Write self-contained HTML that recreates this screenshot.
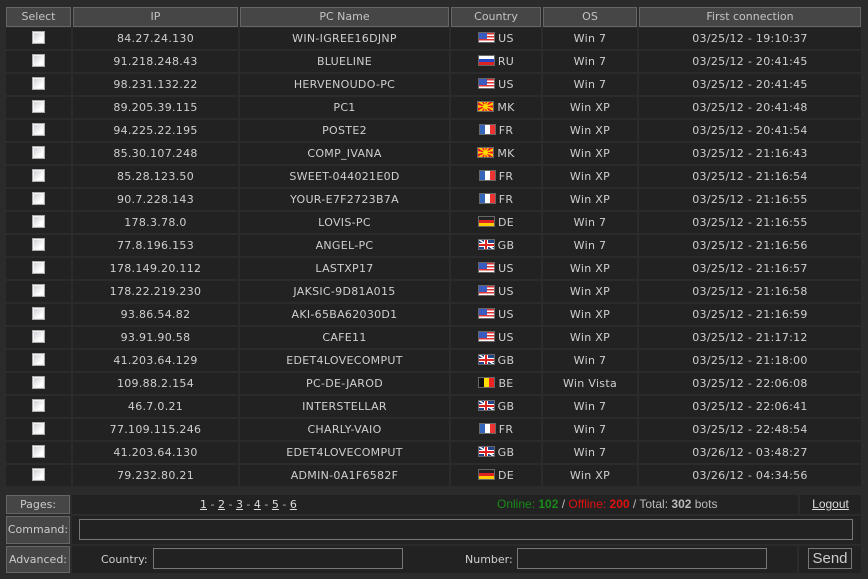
<!DOCTYPE html>
<html><head><meta charset="utf-8"><style>
*{margin:0;padding:0;box-sizing:border-box}
body{width:868px;height:579px;background:#2b2b2b;font-family:"DejaVu Sans","Liberation Sans",sans-serif;font-size:11px;color:#cfcfcf;position:relative;overflow:hidden}
.a{position:absolute}
.h{position:absolute;top:7px;height:20px;background:#464646;border:1px solid #666;text-align:center;line-height:18px;color:#c4c4c4}
.c{position:absolute;height:21px;background:#222;text-align:center;line-height:21px;letter-spacing:.3px}
.cb{display:inline-block;width:13px;height:13px;vertical-align:middle;margin-top:-3px;border:1px solid #aaa;background:linear-gradient(135deg,#c8c8d0,#fff 70%);box-shadow:inset 0 0 0 1px #f4f4f4}
.f{display:inline-block;width:17px;height:11px;vertical-align:middle;margin:-3px 3px 0 0;border:1px solid #666}
.us{background:linear-gradient(#3a5bbf,#3a5bbf) 0 0/8px 6px no-repeat,repeating-linear-gradient(#d33 0 1.5px,#fff 1.5px 3px)}
.ru{background:linear-gradient(#fff 33%,#2646c8 33% 66%,#d22 66%)}
.mk{background:radial-gradient(circle,#fd0 2px,transparent 3px),repeating-conic-gradient(#e22 0 20deg,#fc0 20deg 40deg)}
.fr{background:linear-gradient(90deg,#36b 33%,#fff 33% 66%,#e33 66%)}
.de{background:linear-gradient(#222 33%,#d22 33% 66%,#fc0 66%)}
.gb{background:linear-gradient(#d22,#d22) center/17px 2px no-repeat,linear-gradient(#d22,#d22) center/2px 11px no-repeat,linear-gradient(#fff,#fff) center/17px 4px no-repeat,linear-gradient(#fff,#fff) center/4px 11px no-repeat,linear-gradient(33deg,#248 45%,#fff 45% 55%,#248 55%),#248}
.be{background:linear-gradient(90deg,#111 33%,#fd0 33% 66%,#e22 66%)}
.lb{position:absolute;left:6px;width:64px;background:#464646;border:1px solid #666;text-align:center;color:#ccc}
.in{position:absolute;border:1px solid #777;background:#222}
u{color:#ddd}
</style></head><body>
<div class="h" style="left:6px;width:65px">Select</div>
<div class="h" style="left:73px;width:165px">IP</div>
<div class="h" style="left:240px;width:209px">PC Name</div>
<div class="h" style="left:451px;width:90px">Country</div>
<div class="h" style="left:543px;width:94px">OS</div>
<div class="h" style="left:639px;width:222px">First connection</div>
<div id="rows"></div>
<script>
var d=[["84.27.24.130","WIN-IGREE16DJNP","us","US","Win 7","03/25/12 - 19:10:37"],
["91.218.248.43","BLUELINE","ru","RU","Win 7","03/25/12 - 20:41:45"],
["98.231.132.22","HERVENOUDO-PC","us","US","Win 7","03/25/12 - 20:41:45"],
["89.205.39.115","PC1","mk","MK","Win XP","03/25/12 - 20:41:48"],
["94.225.22.195","POSTE2","fr","FR","Win XP","03/25/12 - 20:41:54"],
["85.30.107.248","COMP_IVANA","mk","MK","Win XP","03/25/12 - 21:16:43"],
["85.28.123.50","SWEET-044021E0D","fr","FR","Win XP","03/25/12 - 21:16:54"],
["90.7.228.143","YOUR-E7F2723B7A","fr","FR","Win XP","03/25/12 - 21:16:55"],
["178.3.78.0","LOVIS-PC","de","DE","Win 7","03/25/12 - 21:16:55"],
["77.8.196.153","ANGEL-PC","gb","GB","Win 7","03/25/12 - 21:16:56"],
["178.149.20.112","LASTXP17","us","US","Win XP","03/25/12 - 21:16:57"],
["178.22.219.230","JAKSIC-9D81A015","us","US","Win XP","03/25/12 - 21:16:58"],
["93.86.54.82","AKI-65BA62030D1","us","US","Win XP","03/25/12 - 21:16:59"],
["93.91.90.58","CAFE11","us","US","Win XP","03/25/12 - 21:17:12"],
["41.203.64.129","EDET4LOVECOMPUT","gb","GB","Win 7","03/25/12 - 21:18:00"],
["109.88.2.154","PC-DE-JAROD","be","BE","Win Vista","03/25/12 - 22:06:08"],
["46.7.0.21","INTERSTELLAR","gb","GB","Win 7","03/25/12 - 22:06:41"],
["77.109.115.246","CHARLY-VAIO","fr","FR","Win 7","03/25/12 - 22:48:54"],
["41.203.64.130","EDET4LOVECOMPUT","gb","GB","Win 7","03/26/12 - 03:48:27"],
["79.232.80.21","ADMIN-0A1F6582F","de","DE","Win XP","03/26/12 - 04:34:56"]];
var h="";d.forEach(function(r,i){var t=28+23*i;
h+='<div class="c" style="top:'+t+'px;left:6px;width:65px"><span class="cb"></span></div>'+
'<div class="c" style="top:'+t+'px;left:73px;width:165px">'+r[0]+'</div>'+
'<div class="c" style="top:'+t+'px;left:240px;width:209px">'+r[1]+'</div>'+
'<div class="c" style="top:'+t+'px;left:451px;width:90px"><span class="f '+r[2]+'"></span>'+r[3]+'</div>'+
'<div class="c" style="top:'+t+'px;left:543px;width:94px">'+r[4]+'</div>'+
'<div class="c" style="top:'+t+'px;left:639px;width:222px">'+r[5]+'</div>';});
document.getElementById("rows").innerHTML=h;
</script>
<div class="lb" style="top:495px;height:19px;line-height:17px">Pages:</div>
<div class="a" style="left:72px;top:495px;width:726px;height:19px;background:#222"></div>
<div class="a" style="left:200px;top:495px;width:106px;line-height:19px;color:#bbb"><u>1</u> - <u>2</u> - <u>3</u> - <u>4</u> - <u>5</u> - <u>6</u></div>
<div class="a" style="left:497px;top:495px;line-height:19px;font-family:'Liberation Sans',sans-serif;font-size:12px;color:#bbb"><span style="color:#1a8a1a">Online: <b>102</b></span> / <span style="color:#e01010">Offline: <b>200</b></span> / Total: <b>302</b> bots</div>
<div class="a" style="left:800px;top:495px;width:61px;height:19px;background:#222;text-align:center;line-height:19px;font-family:'Liberation Sans',sans-serif;font-size:12px"><u>Logout</u></div>
<div class="lb" style="top:516px;height:28px;line-height:26px">Command:</div>
<div class="a" style="left:72px;top:516px;width:789px;height:28px;background:#222"></div>
<div class="in" style="left:79px;top:519px;width:774px;height:21px"></div>
<div class="lb" style="top:546px;height:27px;line-height:25px">Advanced:</div>
<div class="a" style="left:72px;top:546px;width:725px;height:27px;background:#222"></div>
<div class="a" style="left:799px;top:546px;width:62px;height:27px;background:#222"></div>
<div class="a" style="left:101px;top:553px">Country:</div>
<div class="in" style="left:153px;top:548px;width:250px;height:21px"></div>
<div class="a" style="left:465px;top:553px">Number:</div>
<div class="in" style="left:517px;top:548px;width:250px;height:21px"></div>
<div class="in" style="left:808px;top:548px;width:44px;height:21px;text-align:center;line-height:19px;font-family:'Liberation Sans',sans-serif;font-size:15px;color:#ccc">Send</div>
</body></html>
